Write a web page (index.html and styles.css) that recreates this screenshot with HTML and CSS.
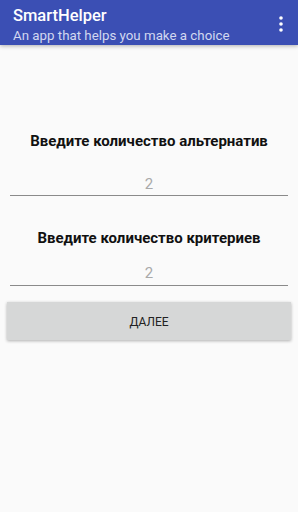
FILE: index.html
```html
<!DOCTYPE html>
<html lang="ru">
<head>
    <meta charset="UTF-8">
    <meta name="viewport" content="width=device-width, initial-scale=1.0">
    <title>SmartHelper</title>
    <link rel="stylesheet" href="styles.css">
</head>
<body>
    <div class="toolbar">
        <div class="toolbar-text">
            <div class="title">SmartHelper</div>
            <div class="subtitle">An app that helps you make a choice</div>
        </div>
        <svg class="menu" width="4" height="16" viewBox="0 0 4 16">
            <circle cx="2" cy="2" r="1.8" fill="#fff"/>
            <circle cx="2" cy="8" r="1.8" fill="#fff"/>
            <circle cx="2" cy="14" r="1.8" fill="#fff"/>
        </svg>
    </div>
    <div class="content">
        <h3 class="label first">Введите количество альтернатив</h3>
        <div class="field first">2</div>
        <h3 class="label second">Введите количество критериев</h3>
        <div class="field second">2</div>
        <button class="next">ДАЛЕЕ</button>
    </div>
</body>
</html>
```

FILE: styles.css
```css
body {
    margin: 0;
    background-color: #fafafa;
    font-family: Roboto, "Liberation Sans", sans-serif;
    width: 298px;
    height: 512px;
    overflow: hidden;
}
.toolbar {
    height: 45px;
    background-color: #3b4fb4;
    display: flex;
    justify-content: space-between;
    align-items: flex-start;
    padding: 0 15px 0 13px;
    box-shadow: 0 1px 4px rgba(0, 0, 0, 0.3);
}
.toolbar-text {
    padding-top: 6px;
}
.title {
    color: #fff;
    font-size: 16.5px;
    font-weight: 500;
    line-height: 20px;
}
.subtitle {
    color: #d2d8f0;
    font-size: 13.3px;
    line-height: 17px;
    margin-top: 1px;
}
.menu {
    margin-top: 16px;
}
.content {
    padding: 0 10px;
    display: flex;
    flex-direction: column;
}
.label {
    margin: 0;
    text-align: center;
    font-size: 15px;
    font-weight: bold;
    color: #111;
    line-height: 20px;
}
.label.first {
    margin-top: 86px;
}
.label.second {
    margin-top: 32px;
}
.field {
    text-align: center;
    color: #a9a9a9;
    font-size: 15px;
    line-height: 18px;
    border-bottom: 1px solid #8a8a8a;
}
.field.first {
    margin-top: 24px;
    padding-bottom: 2px;
}
.field.second {
    margin-top: 16px;
    padding-bottom: 3px;
}
.next {
    margin: 16px -3px 0 -3px;
    height: 38px;
    padding-top: 3px;
    border: none;
    background-color: #d6d7d7;
    color: #222;
    font-family: Roboto, "Liberation Sans", sans-serif;
    font-size: 12px;
    box-shadow: 0 1px 3px rgba(0, 0, 0, 0.3);
}
```
